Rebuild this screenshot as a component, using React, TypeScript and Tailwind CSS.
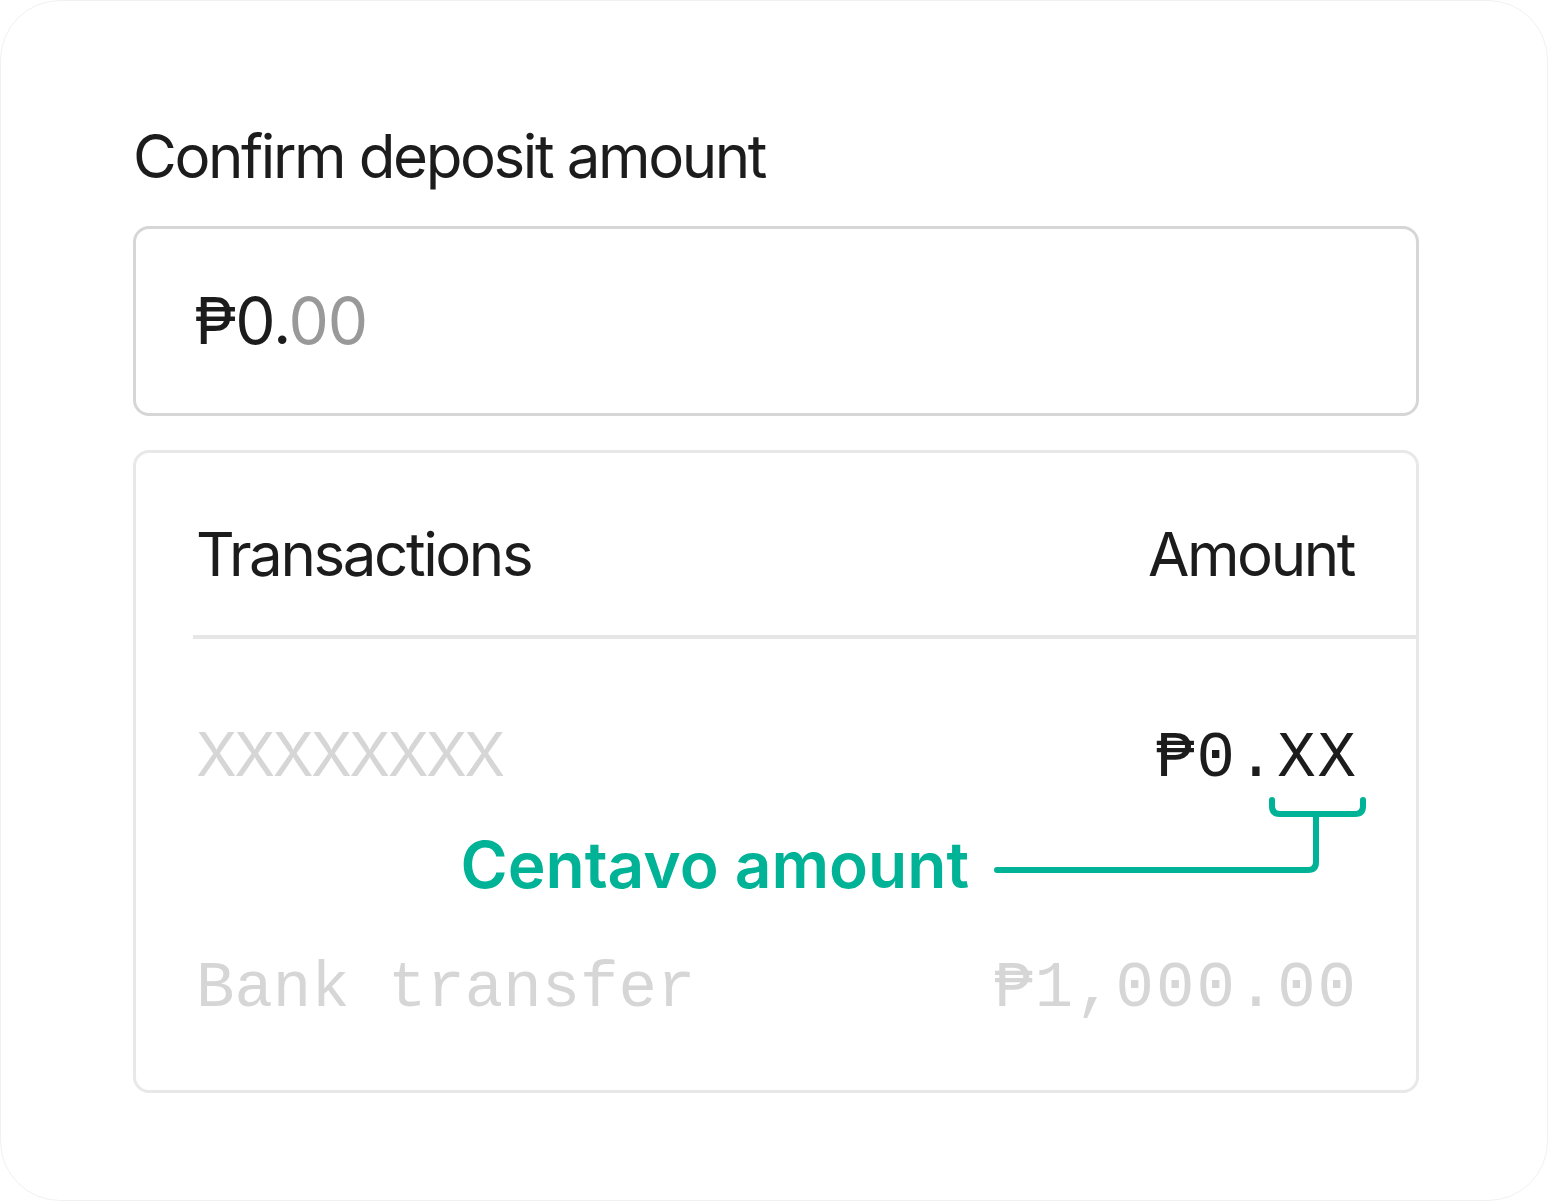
import React from 'react';

const sans = "font-['Inter','DejaVu_Sans',sans-serif]";
const mono = "font-['Liberation_Mono','DejaVu_Sans_Mono',monospace]";

const CentavoPointer: React.FC = () => (
  <svg
    className="absolute left-[855px] top-[338px]"
    width="380"
    height="90"
    viewBox="0 0 380 90"
    fill="none"
    stroke="#00b396"
    strokeWidth="6"
    strokeLinecap="round"
    strokeLinejoin="round"
  >
    {/* bracket under the centavos */}
    <path d="M281 9 V15 Q281 23 289 23 H364 Q372 23 372 15 V9" />
    {/* stem + leader line to the label */}
    <path d="M325 23 V71 Q325 79 317 79 H6" />
  </svg>
);

export default function App() {
  return (
    <div className="w-[1548px] h-[1201px] bg-white">
      <div className="w-full h-full rounded-[60px] border border-[#f1f1f1] pl-[132px] pr-[128px] pt-[125px]">
        {/* Label */}
        <div className={`${sans} text-[60px] leading-none tracking-[-2.4px] text-[#1c1c1c]`}>
          Confirm deposit amount
        </div>

        {/* Amount input */}
        <div className="mt-[40px] h-[190px] rounded-2xl border-[3px] border-[#d6d6d6] pl-[58px] flex items-center">
          <span className={`${sans} text-[64px] leading-none tracking-[-1.2px] text-[#1c1c1c]`}>
            ₱0.<span className="text-[#999999]">00</span>
          </span>
        </div>

        {/* Transactions table */}
        <div className="relative mt-[34px] h-[643px] rounded-2xl border-[3px] border-[#e8e8e8] pl-[60px] pr-[62px] pt-[71px]">
          <div className={`${sans} flex justify-between items-baseline text-[60px] leading-none tracking-[-2.4px] text-[#1c1c1c]`}>
            <span>Transactions</span>
            <span>Amount</span>
          </div>

          <div className="mt-[51px] h-[4px] bg-[#e6e6e6] ml-[-3px] mr-[-62px]" />

          {/* Row 1 */}
          <div className="mt-[85px] h-[109px] flex justify-between items-baseline">
            <span className={`${sans} text-[60px] leading-none tracking-[-2.6px] text-[#d6d6d6]`}>XXXXXXXX</span>
            <span className={`${mono} text-[64px] leading-none tracking-[2px] mr-[-4px] text-[#1c1c1c]`}>₱0.XX</span>
          </div>

          {/* Annotation */}
          <div className="h-[124px] flex justify-end pr-[385px]">
            <span className={`${sans} text-[64px] leading-none font-semibold text-[#00b396]`}>
              Centavo amount
            </span>
          </div>

          {/* Row 2 */}
          <div className={`${mono} flex justify-between items-baseline text-[64px] leading-none text-[#d6d6d6]`}>
            <span>Bank transfer</span>
            <span className="tracking-[2px] mr-[-4px]">₱1,000.00</span>
          </div>

          <CentavoPointer />
        </div>
      </div>
    </div>
  );
}
